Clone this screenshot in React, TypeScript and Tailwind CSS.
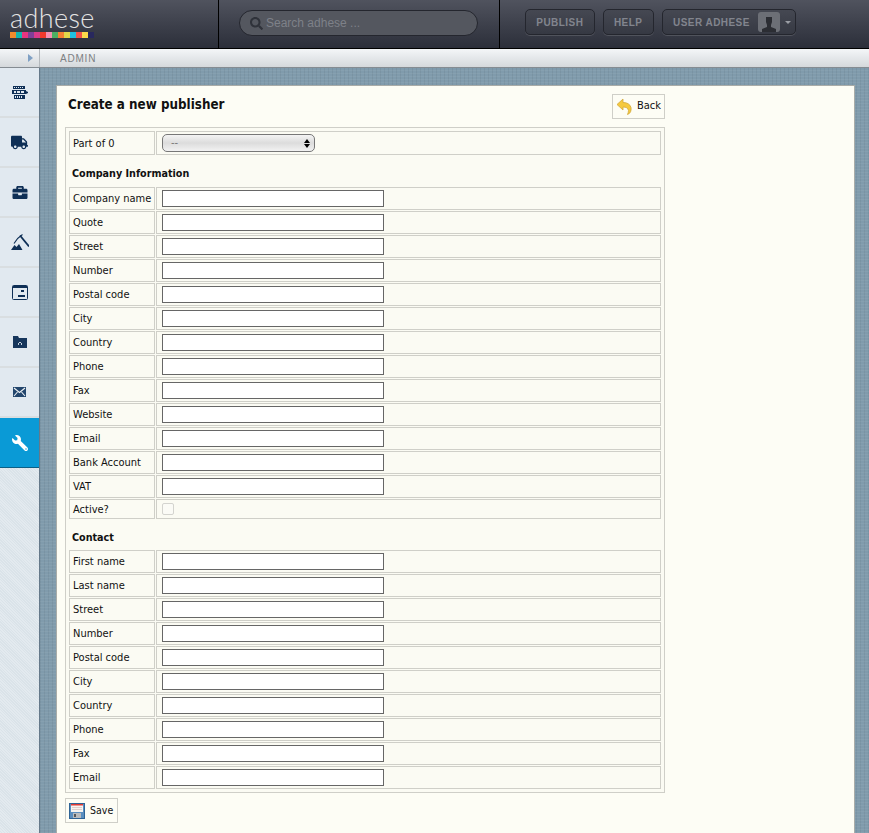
import { FaBriefcase, FaTruck, FaWrench, FaSearch } from "react-icons/fa"

const logoColors = ["bg-[#f08a2c]", "bg-[#12b5b0]", "bg-[#e8347f]", "bg-[#7f3f98]", "bg-[#d83a8a]", "bg-[#f0392b]", "bg-[#f48fb1]", "bg-[#4caf62]", "bg-[#f58233]", "bg-[#e2d84a]", "bg-[#1fc0e0]", "bg-[#f0544a]", "bg-[#fbd94a]", "bg-[#28285e]"]

const companyFields = ["Company name", "Quote", "Street", "Number", "Postal code", "City", "Country", "Phone", "Fax", "Website", "Email", "Bank Account", "VAT"]
const contactFields = ["First name", "Last name", "Street", "Number", "Postal code", "City", "Country", "Phone", "Fax", "Email"]

function ServerIcon() {
  return (
    <svg width="16" height="13" viewBox="0 0 16 13" fill="#0e2f56">
      <path d="M1 0h12v3H1zM0 4h14v4H0zM1 9h12v4H1zM14 5l2 1v1l-2 1z" />
      <path d="M2 1h1v1H2zM4 1h1v1H4zM6 1h1v1H6zM8 1h1v1H8zM10 1h1v1h-1zM2 5h2v2H2zM5 5h3v2H5zM9 5h3v2H9zM1 9h1v4H1zM3 10h1v2H3zM5 10h1v2H5zM7 10h1v2H7zM9 10h1v2H9z" fill="#e1e9f0" />
    </svg>
  )
}

function MiningIcon() {
  return (
    <svg width="18" height="16" viewBox="0 0 18 16">
      <path d="M0 16l3.500-5 2 2 2.500-3 3.500 6z" fill="#0e2f56" />
      <path d="M9 1.500l9 11" stroke="#0e2f56" strokeWidth="1.800" fill="none" />
      <path d="M3 9.500C5 6 7.500 3 11.500 0.500" stroke="#0e2f56" strokeWidth="1.100" fill="none" />
    </svg>
  )
}

function WindowIcon() {
  return (
    <svg width="16" height="15" viewBox="0 0 16 15">
      <rect x="0.5" y="0.5" width="15" height="14" rx="1" fill="#e1e9f0" stroke="#0e2f56" />
      <path d="M1 1h14v2H1zM9 5h3v2H9zM6 10h7v2H6z" fill="#0e2f56" />
    </svg>
  )
}

function FolderIcon() {
  return (
    <svg width="14" height="12" viewBox="0 0 14 12" fill="#16365c">
      <path d="M0 0h5l1 2h8v10H0z" />
      <path d="M5 7h1v2H5zM8 7h1v2H8zM6 6h2v1H6z" fill="#c5d2de" />
    </svg>
  )
}

function MailIcon() {
  return (
    <svg width="13" height="10" viewBox="0 0 13 10">
      <rect width="13" height="10" fill="#23466d" />
      <path d="M1 1l5.500 4.500L12 1M1 9l3.500-4M12 9L8.500 5" stroke="#eef2f5" strokeWidth="1.100" fill="none" />
    </svg>
  )
}

function AvatarIcon() {
  return (
    <svg width="16" height="15" viewBox="0 0 16 15" fill="#2b2d33">
      <path d="M5 0h6v5l-1 3v2l5 2v3H1v-3l5-2V8L5 5z" />
    </svg>
  )
}

function BackIcon() {
  return (
    <svg width="16" height="17" viewBox="0 0 16 17">
      <path d="M7 1L1 6.500 7 12V9c3 0 5 1 5.500 3.500 0 1-.5 3-1 4 3-1 4-4 3.500-7C14 6 11 4.500 7 4.500z" fill="#f5c93e" stroke="#d2a83c" strokeWidth="0.800" />
    </svg>
  )
}

function SaveIcon() {
  return (
    <svg width="16" height="16" viewBox="0 0 16 16">
      <rect x="0.5" y="0.5" width="15" height="15" fill="#5b8fc0" stroke="#2f6496" />
      <rect x="2" y="1" width="12" height="8" fill="#f7f4f0" />
      <rect x="2" y="1" width="12" height="1.500" fill="#e03a34" />
      <path d="M3 4h10v.8H3zM3 6h10v.8H3z" fill="#d9c4c0" />
      <rect x="4" y="10" width="8" height="5" fill="#b9bcbf" />
      <rect x="5" y="11" width="2" height="3" fill="#55585c" />
    </svg>
  )
}

function NavItem({ children, active }: { children: React.ReactNode; active?: boolean }) {
  return (
    <div className={active ? "flex h-[50px] items-center justify-center border-b border-[#0b5f86] bg-[#0a9ad6]" : "flex h-[50px] items-center justify-center border-b-2 border-[#d9dee1] bg-[#e1e9f0]"}>
      {children}
    </div>
  )
}

function Row({ label, h = "h-[23px]", children }: { label: string; h?: string; children: React.ReactNode }) {
  return (
    <div className="flex gap-px">
      <div className={`${h} flex w-[86px] shrink-0 items-center whitespace-nowrap border border-[#cfcfc8] pl-[3px] pt-[2px] text-[#111]`}>{label}</div>
      <div className={`${h} flex flex-1 items-center border border-[#cfcfc8] pl-[6px]`}>{children}</div>
    </div>
  )
}

function TextInput() {
  return <input type="text" className="-ml-px h-[17px] w-[222px] border border-[#666] bg-white" />
}

function Heading({ className, children }: { className: string; children: React.ReactNode }) {
  return <div className={`${className} flex items-center pl-[3px] text-[10.700px] font-bold text-[#111]`}>{children}</div>
}

function TopButton({ children }: { children: React.ReactNode }) {
  return (
    <div className="flex h-[26px] items-center rounded-[5px] border border-[#24262e] bg-gradient-to-b from-[#454852] to-[#363943] px-[10.300px] font-['Liberation_Sans',sans-serif] text-[10px] font-bold tracking-[0.450px] text-[#82858e] shadow-[0_1px_0_#50535c]">
      {children}
    </div>
  )
}

export default function App() {
  return (
    <div className="flex h-[833px] w-[869px] flex-col overflow-hidden bg-[#7f9aab] font-['DejaVu_Sans_Condensed','DejaVu_Sans',sans-serif] text-[11px]">
      <header className="flex h-[49px] shrink-0 border-b border-black bg-gradient-to-b from-[#50535e] to-[#2c2f3a]">
        <div className="flex w-[219px] flex-col border-r border-black pl-[10px] pt-[4px]">
          <div className="h-[28px] font-['Lato',sans-serif] text-[27px] leading-[28px] font-light tracking-[0.400px] text-[#e4e4e4]">adhese</div>
          <div className="flex">
            {logoColors.map((c) => (
              <div key={c} className={`h-[6px] w-[6px] ${c}`} />
            ))}
          </div>
        </div>
        <div className="flex w-[281px] items-start border-r border-black pl-[20px] pt-[10px]">
          <div className="flex h-[26px] w-[239px] items-center gap-[3px] rounded-[13px] border border-[#24262e] bg-[#54575f] pl-[10px] font-['Liberation_Sans',sans-serif] text-[12px] text-[#7e8189]">
            <FaSearch className="h-[13px] w-[13px] text-[#2f323a]" />
            Search adhese ...
          </div>
        </div>
        <div className="flex items-start gap-2 pl-[25px] pt-[9px]">
          <TopButton>PUBLISH</TopButton>
          <TopButton>HELP</TopButton>
          <TopButton>
            USER ADHESE
            <div className="ml-2 flex h-[20px] w-[22px] items-end justify-center rounded-[3px] bg-[#6c6f76]">
              <AvatarIcon />
            </div>
            <div className="-mr-[6px] ml-[5px] h-0 w-0 border-x-[3px] border-t-[3px] border-x-transparent border-t-[#9a9da4]" />
          </TopButton>
        </div>
      </header>

      <div className="flex h-[19px] shrink-0 border-b border-[#858c92] bg-gradient-to-b from-[#f4f6f8] to-[#d5d9dc]">
        <div className="flex w-[40px] items-center justify-end border-r border-[#b4b9bd] pr-[6px]">
          <div className="h-0 w-0 border-y-[4px] border-l-[5px] border-y-transparent border-l-[#7fa0c4]" />
        </div>
        <div className="flex items-center pl-[20px] font-['Liberation_Sans',sans-serif] text-[10px] tracking-[0.800px] text-[#7d8083]">ADMIN</div>
      </div>

      <div className="flex min-h-0 flex-1">
        <nav className="flex w-[40px] shrink-0 flex-col border-r border-[#65798a] bg-[repeating-linear-gradient(45deg,#e3eaef,#e3eaef_1px,#dae3e9_1px,#dae3e9_2px)]">
          <NavItem><ServerIcon /></NavItem>
          <NavItem><FaTruck className="h-[15px] w-[17px] text-[#0e2f56]" /></NavItem>
          <NavItem><FaBriefcase className="h-[15px] w-[16px] text-[#0e2f56]" /></NavItem>
          <NavItem><MiningIcon /></NavItem>
          <NavItem><WindowIcon /></NavItem>
          <NavItem><FolderIcon /></NavItem>
          <NavItem><MailIcon /></NavItem>
          <NavItem active><FaWrench className="h-[16px] w-[16px] -scale-x-100 text-white" /></NavItem>
        </nav>

        <main className="min-w-0 flex-1 bg-[#809bac] bg-[repeating-linear-gradient(0deg,rgba(255,255,255,0.05),rgba(255,255,255,0.05)_1px,transparent_1px,transparent_3px),repeating-linear-gradient(90deg,rgba(0,0,0,0.05),rgba(0,0,0,0.05)_1px,transparent_1px,transparent_4px)] pl-[16px] pr-[14px] pt-[17px]">
          <div className="h-[760px] border border-[#a9aca8] bg-[#fdfdf5] pl-[8px] pt-[8px]">
            <div className="flex w-[600px] items-start justify-between pb-[8px]">
              <h1 className="pl-[3px] text-[13.300px] leading-[22px] font-bold text-[#111]">Create a new publisher</h1>
              <div className="flex h-[25px] w-[53px] items-center gap-[5px] border border-[#cfcfc8] pl-[3px] text-[#111]">
                <BackIcon />
                Back
              </div>
            </div>

            <div className="flex w-[600px] flex-col gap-px border border-[#cfcfc8] bg-[#fbfbf3] p-[3px]">
              <Row label="Part of 0" h="h-[24px]">
                <div className="-ml-px flex h-[18px] w-[153px] items-center justify-between rounded-[5px] border border-[#777] bg-gradient-to-b from-[#f4f4f4] via-[#dcdcdc] to-[#f2f2f2] pl-2 pr-1 text-[#777]">
                  --
                  <span className="flex flex-col gap-px">
                    <span className="h-0 w-0 border-x-[3px] border-b-[4px] border-x-transparent border-b-black" />
                    <span className="h-0 w-0 border-x-[3px] border-t-[4px] border-x-transparent border-t-black" />
                  </span>
                </div>
              </Row>
              <Heading className="h-[30px] pt-[6px]">Company Information</Heading>
              {companyFields.map((f) => (
                <Row key={f} label={f}><TextInput /></Row>
              ))}
              <Row label="Active?" h="h-[20px]">
                <input type="checkbox" className="-ml-px h-[12px] w-[12px] appearance-none rounded-[2px] border border-[#d4d4cf] bg-[#fbfbf6]" />
              </Row>
              <Heading className="h-[29px] pt-[8px]">Contact</Heading>
              {contactFields.map((f) => (
                <Row key={`c-${f}`} label={f}><TextInput /></Row>
              ))}
            </div>

            <div className="mt-[5px] flex h-[25px] w-[53px] items-center gap-[5px] border border-[#cfcfc8] pl-[3px] text-[10.500px] text-[#111]">
              <SaveIcon />
              <span>Save</span>
            </div>
          </div>
        </main>
      </div>
    </div>
  )
}
